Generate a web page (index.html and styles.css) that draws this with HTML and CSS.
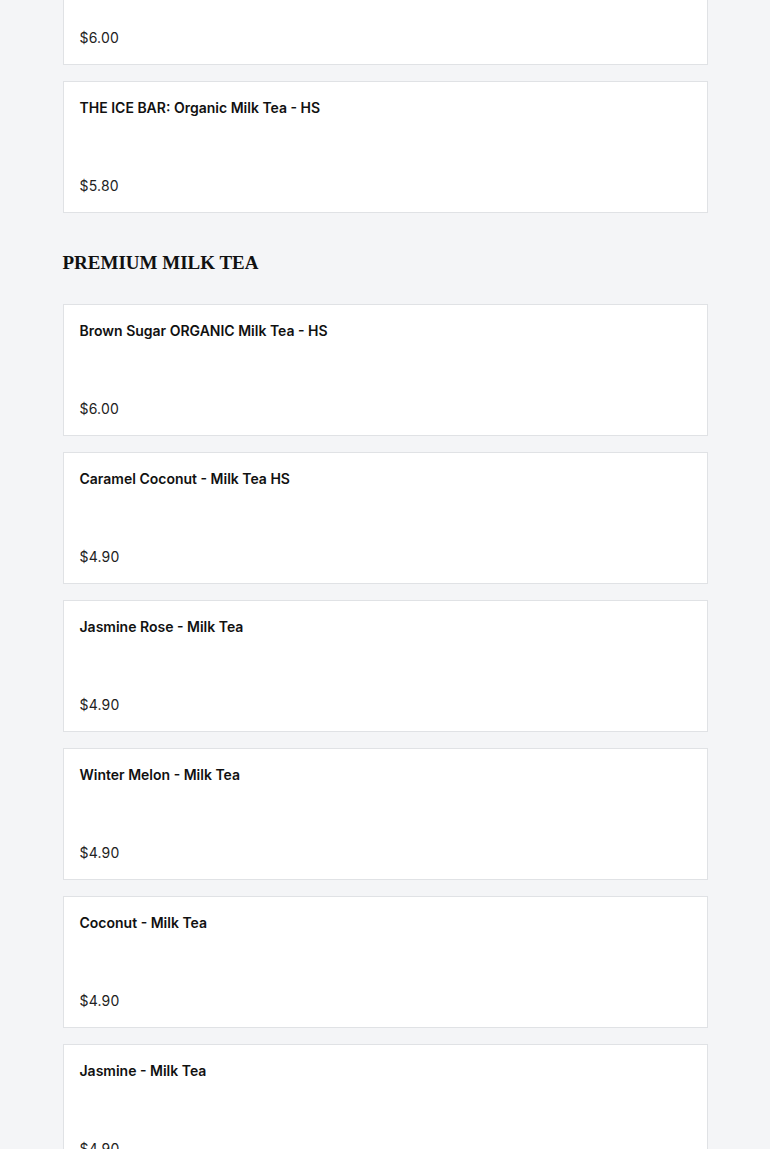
FILE: index.html
```html
<!DOCTYPE html>
<html lang="en">
<head>
    <meta charset="UTF-8">
    <meta name="viewport" content="width=device-width, initial-scale=1.0">
    <title>Menu</title>
    <link rel="stylesheet" href="styles.css">
</head>
<body>
    <main class="menu">
        <section class="category">
            <div class="item-list">
                <div class="item">
                    <div class="item-name">THE ICE BAR: Brown Sugar Milk Tea - HS</div>
                    <div class="item-price">$6.00</div>
                </div>
                <div class="item">
                    <div class="item-name">THE ICE BAR: Organic Milk Tea - HS</div>
                    <div class="item-price">$5.80</div>
                </div>
            </div>
        </section>

        <section class="category">
            <h2 class="category-title">PREMIUM MILK TEA</h2>
            <div class="item-list">
                <div class="item">
                    <div class="item-name">Brown Sugar ORGANIC Milk Tea - HS</div>
                    <div class="item-price">$6.00</div>
                </div>
                <div class="item">
                    <div class="item-name">Caramel Coconut - Milk Tea HS</div>
                    <div class="item-price">$4.90</div>
                </div>
                <div class="item">
                    <div class="item-name">Jasmine Rose - Milk Tea</div>
                    <div class="item-price">$4.90</div>
                </div>
                <div class="item">
                    <div class="item-name">Winter Melon - Milk Tea</div>
                    <div class="item-price">$4.90</div>
                </div>
                <div class="item">
                    <div class="item-name">Coconut - Milk Tea</div>
                    <div class="item-price">$4.90</div>
                </div>
                <div class="item">
                    <div class="item-name">Jasmine - Milk Tea</div>
                    <div class="item-price">$4.90</div>
                </div>
            </div>
        </section>
    </main>
</body>
</html>
```

FILE: styles.css
```css
:root {
    --bg: #f4f5f7;
    --border: #e0e2e5;
    --text: #111;
}

body {
    margin: 0;
    background: var(--bg);
    font-family: Inter, 'Open Sans', sans-serif;
    color: var(--text);
    overflow: hidden;
}

/* page is shown scrolled part way down */
.menu {
    max-width: 645px;
    margin: -67px auto 0;
}

.category-title {
    font-family: 'Liberation Serif', serif;
    font-size: 19px;
    font-weight: 700;
    line-height: 36px;
    margin: 32px 0 23px;
}

.item-list {
    display: flex;
    flex-direction: column;
    gap: 16px;
}

.item {
    background: #fff;
    border: 1px solid var(--border);
    padding: 16px;
    display: flex;
    flex-direction: column;
    gap: 58px;
}

.item-name {
    font-size: 14px;
    font-weight: 600;
    line-height: 20px;
}

.item-price {
    font-size: 14px;
    line-height: 20px;
    letter-spacing: 0.2px;
    color: #222;
}
```
